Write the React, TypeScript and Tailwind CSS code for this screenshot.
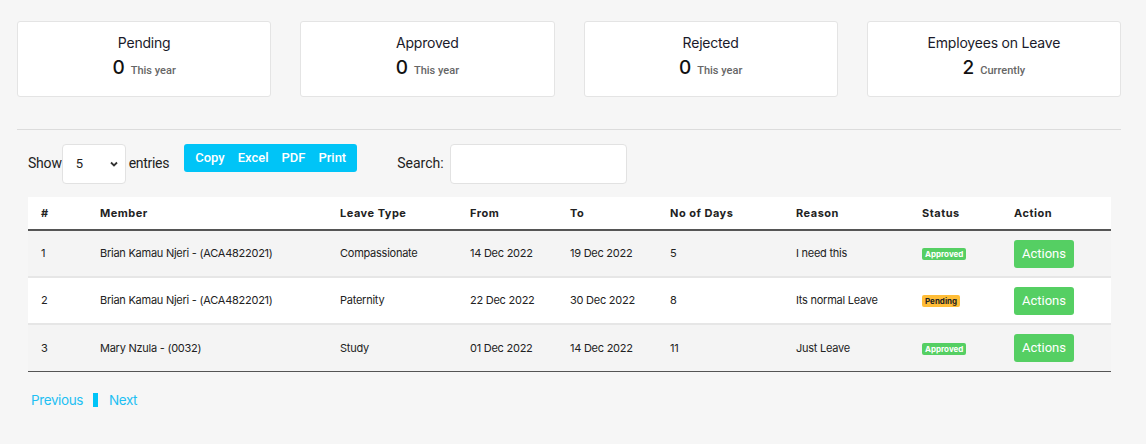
import React from 'react';

const stats = [
  { title: 'Pending', value: 0, note: 'This year' },
  { title: 'Approved', value: 0, note: 'This year' },
  { title: 'Rejected', value: 0, note: 'This year' },
  { title: 'Employees on Leave', value: 2, note: 'Currently' },
];

const rows = [
  { id: 1, member: 'Brian Kamau Njeri - (ACA4822021)', type: 'Compassionate', from: '14 Dec 2022', to: '19 Dec 2022', days: 5, reason: 'I need this', status: 'Approved' },
  { id: 2, member: 'Brian Kamau Njeri - (ACA4822021)', type: 'Paternity', from: '22 Dec 2022', to: '30 Dec 2022', days: 8, reason: 'Its normal Leave', status: 'Pending' },
  { id: 3, member: 'Mary Nzula - (0032)', type: 'Study', from: '01 Dec 2022', to: '14 Dec 2022', days: 11, reason: 'Just Leave', status: 'Approved' },
];

const cols = [
  { label: '#', w: 'w-[72px]' },
  { label: 'Member', w: 'w-[240px]' },
  { label: 'Leave Type', w: 'w-[130px]' },
  { label: 'From', w: 'w-[100px]' },
  { label: 'To', w: 'w-[100px]' },
  { label: 'No of Days', w: 'w-[126px]' },
  { label: 'Reason', w: 'w-[126px]' },
  { label: 'Status', w: 'w-[92px]' },
  { label: 'Action', w: '' },
];

export default function App() {
  return (
    <div className="min-h-[444px] w-full bg-[#f6f6f6] pl-[17px] pr-[25px] pt-[21px] font-['Inter',sans-serif] text-[#222]">
      {/* Summary cards */}
      <div className="grid grid-cols-4 gap-[29px]">
        {stats.map((s) => (
          <div key={s.title} className="flex h-[76px] flex-col items-center rounded-[3px] border border-[#e4e4e4] bg-white pt-[12px]">
            <div className="text-[14px] leading-[18px] tracking-[-0.2px] text-[#1a1a2a]">{s.title}</div>
            <div className="mt-[5px] flex items-baseline gap-[6px]">
              <span className="text-[19px] font-medium leading-[22px] text-[#111]">{s.value}</span>
              <span className="font-['Roboto',sans-serif] text-[11px] font-medium text-[#666]">{s.note}</span>
            </div>
          </div>
        ))}
      </div>

      <div className="mt-[32px] h-px bg-[#dcdcdc]" />

      <div className="pl-[11px] pr-[10px]">
        {/* Controls */}
        <div className="mt-[14px] flex items-start font-['Roboto',sans-serif] text-[14px] text-[#222]">
          <span className="mt-[9px] tracking-[-0.2px]">Show</span>
          <div className="flex h-[40px] w-[64px] items-center justify-between rounded-[4px] border border-[#e2e2e2] bg-white pl-[13px] pr-[6px] text-[13px]">
            <span>5</span>
            <svg width="10" height="10" viewBox="0 0 10 10" fill="none" stroke="#333" strokeWidth="1.8">
              <path d="M2 3.5l3 3 3-3" />
            </svg>
          </div>
          <span className="ml-[3px] mt-[9px] tracking-[-0.3px]">entries</span>
          <div className="ml-[15px] flex h-[28px] items-center gap-[13px] rounded-[3px] bg-[#00c4f7] px-[11px] text-[13px] font-medium text-white">
            <span>Copy</span>
            <span>Excel</span>
            <span>PDF</span>
            <span>Print</span>
          </div>
          <span className="ml-[40px] mt-[9px]">Search:</span>
          <div className="ml-[6px] h-[40px] w-[177px] rounded-[4px] border border-[#e2e2e2] bg-white" />
        </div>

        {/* Table */}
        <table className="mt-[13px] w-full border-collapse text-left text-[11px] tracking-[-0.25px]">
          <thead>
            <tr className="h-[33px] border-b-2 border-b-[#555] bg-white">
              {cols.map((c, i) => (
                <th key={c.label} className={`${c.w} ${i === 0 ? 'pl-[13px]' : ''} font-bold tracking-[0.5px] text-[#222]`}>
                  {c.label}
                </th>
              ))}
            </tr>
          </thead>
          <tbody>
            {rows.map((r, i) => (
              <tr key={r.id} className={`h-[47px] ${i < rows.length - 1 ? 'border-b-2 border-[#e6e6e6]' : 'border-b border-[#555]'} ${i % 2 === 0 ? 'bg-[#f4f4f4]' : 'bg-white'}`}>
                <td className="pl-[13px]">{r.id}</td>
                <td>{r.member}</td>
                <td>{r.type}</td>
                <td>{r.from}</td>
                <td>{r.to}</td>
                <td>{r.days}</td>
                <td>{r.reason}</td>
                <td>
                  {r.status === 'Approved' ? (
                    <span className="inline-block rounded-[2px] bg-[#55cf63] px-[3px] text-[8px] font-bold leading-[12px] tracking-normal text-white">Approved</span>
                  ) : (
                    <span className="inline-block rounded-[2px] bg-[#ffbd37] px-[3px] text-[8px] font-bold leading-[12px] tracking-normal text-[#222]">Pending</span>
                  )}
                </td>
                <td>
                  <span className="inline-flex h-[28px] w-[60px] items-center justify-center rounded-[3px] bg-[#55cf63] font-['Roboto',sans-serif] text-[13px] tracking-normal text-white">
                    Actions
                  </span>
                </td>
              </tr>
            ))}
          </tbody>
        </table>

        {/* Pagination */}
        <div className="mt-[18px] flex items-center pl-[3px] text-[13.5px] tracking-[-0.4px] text-[#1ec0f3]">
          <span>Previous</span>
          <span className="ml-[10px] h-[14px] w-[5px] bg-[#00c4f7]" />
          <span className="ml-[11px]">Next</span>
        </div>
      </div>
    </div>
  );
}
